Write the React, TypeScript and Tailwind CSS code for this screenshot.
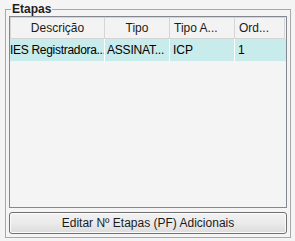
import React from "react";

const font = { fontFamily: '"Liberation Sans", Arial, sans-serif' };

export default function App() {
  return (
    <div className="w-[295px] h-[241px] bg-[#f4f4f4] pl-[5px] pr-[4px] pt-[2px]" style={font}>
      <div className="flex flex-col w-[286px]">
        <div className="flex h-[14px]">
          <div className="w-[6px] h-[7px] self-end border-l border-t border-[#a8a8a8]"></div>
          <div className="px-[1px] text-[12px] leading-[14px] font-bold text-[#1e1e1e]">Etapas</div>
          <div className="flex-1 h-[7px] self-end border-r border-t border-[#a8a8a8]"></div>
        </div>
        <div className="border-x border-b border-[#a8a8a8] px-[3px] pb-[3px] h-[222px] flex flex-col gap-[4px]">
          <div className="h-[192px] border border-[#828790] bg-[#f4f4f4] flex flex-col">
            <div className="grid grid-cols-[95px_65px_65px_50px] h-[22px] text-[12px] text-[#1b1b1b]">
              <div className="border border-[#d5d5d5] bg-[#f3f3f3] flex items-center justify-center">Descrição</div>
              <div className="border border-[#d5d5d5] border-l-0 bg-[#f3f3f3] flex items-center justify-center">Tipo</div>
              <div className="border border-[#d5d5d5] border-l-0 bg-[#f3f3f3] flex items-center pl-[4px]">Tipo A...</div>
              <div className="border border-[#d5d5d5] border-l-0 bg-[#f3f3f3] flex items-center pl-[4px]">Ord...</div>
            </div>
            <div className="grid grid-cols-[95px_65px_65px_50px] h-[22px] text-[12px] text-black bg-[#c8ebeb]">
              <div className="flex items-center border-r border-white whitespace-nowrap overflow-hidden tracking-[-0.3px]">IES Registradora...</div>
              <div className="flex items-center pl-[2px] border-r border-white whitespace-nowrap overflow-hidden tracking-[-0.2px]">ASSINAT...</div>
              <div className="flex items-center pl-[3px] border-r border-white">ICP</div>
              <div className="flex items-center pl-[3px]">1</div>
            </div>
          </div>
          <button className="h-[22px] w-full border border-[#707070] rounded-[3px] bg-gradient-to-b from-[#f2f2f2] via-[#ebebeb] to-[#dcdcdc] text-[12px] text-[#1b1b1b] flex items-center justify-center shadow-[inset_0_0_0_1px_#fcfcfc]">
            Editar Nº Etapas (PF) Adicionais
          </button>
        </div>
      </div>
    </div>
  );
}
